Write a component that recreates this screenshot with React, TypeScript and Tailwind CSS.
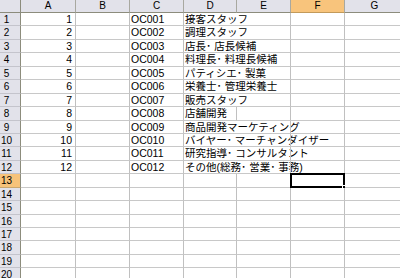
const cols = ['A', 'B', 'C', 'D', 'E', 'F', 'G'];
const widths = ['w-[55px]', 'w-[54px]', 'w-[54px]', 'w-[53px]', 'w-[54px]', 'w-[54px]', 'w-[60px]'];

const jobs = [
  '接客スタッフ',
  '調理スタッフ',
  '店長･ 店長候補',
  '料理長･ 料理長候補',
  'パティシエ･ 製菓',
  '栄養士･ 管理栄養士',
  '販売スタッフ',
  '店舗開発',
  '商品開発マーケティング',
  'バイヤー･ マーチャンダイザー',
  '研究指導･ コンサルタント',
  'その他(総務･ 営業･ 事務)',
];

const font = { fontFamily: '"Liberation Sans", "Noto Sans CJK JP", sans-serif' };

function Row({ n }: { n: number }) {
  const job = n <= 12 ? jobs[n - 1] : '';
  const overflow = job.length > 5;
  const active = n === 13;
  return (
    <div className="flex h-[13.44px]">
      <div
        className={
          active
            ? 'w-[21px] shrink-0 bg-[#f7c37a] border-r border-r-[#8c8c7c] border-b border-b-[#c9a770] text-[10px] leading-[13px] text-black text-center pr-[7px]'
            : 'w-[21px] shrink-0 bg-[#e2e2ea] border-r border-r-[#8c8c7c] border-b border-b-[#c4c4cc] text-[10px] leading-[13px] text-black text-center pr-[7px]'
        }
      >
        {n}
      </div>
      {cols.map((c, i) => {
        let text: string = '';
        if (n <= 12) {
          if (c === 'A') text = String(n);
          if (c === 'C') text = 'OC' + String(n).padStart(3, '0');
          if (c === 'D') text = job;
        }
        const noRight = c === 'D' && overflow;
        return (
          <div
            key={c}
            className={
              (noRight ? 'border-r-0 ' : 'border-r border-r-[#c0c0c0] ') +
              widths[i] +
              ' shrink-0 relative border-b border-b-[#c8c8c8] text-[10.5px] leading-[13px] text-black whitespace-nowrap ' +
              (c === 'A' ? 'text-right pr-[3px]' : 'pl-[1px]')
            }
          >
            {text}
            {active && c === 'F' && (
              <div className="absolute -left-[1px] -top-[1px] w-[55px] h-[15px] border-2 border-black">
                <div className="absolute -right-[3px] -bottom-[3px] w-[4px] h-[4px] bg-black border border-white" />
              </div>
            )}
          </div>
        );
      })}
    </div>
  );
}

export default function App() {
  const rows = Array.from({ length: 20 }, (_, i) => i + 1);
  return (
    <div className="w-[400px] h-[278px] overflow-hidden bg-white" style={font}>
      <div className="flex h-[13px]">
        <div className="w-[21px] shrink-0 bg-[#e2e2ea] border-r border-r-[#8c8c7c] border-b border-b-[#8c8c7c]" />
        {cols.map((c, i) => (
          <div
            key={c}
            className={
              (c === 'F'
                ? 'bg-[#f8c47c] border-b-[#c29a5a] '
                : 'bg-[#e2e2ea] border-b-[#8c8c7c] ') +
              widths[i] +
              ' shrink-0 border-r border-r-[#a8a8a0] border-b text-[10px] leading-[12px] text-center text-black'
            }
          >
            {c}
          </div>
        ))}
      </div>
      {rows.map((n) => (
        <Row key={n} n={n} />
      ))}
    </div>
  );
}
